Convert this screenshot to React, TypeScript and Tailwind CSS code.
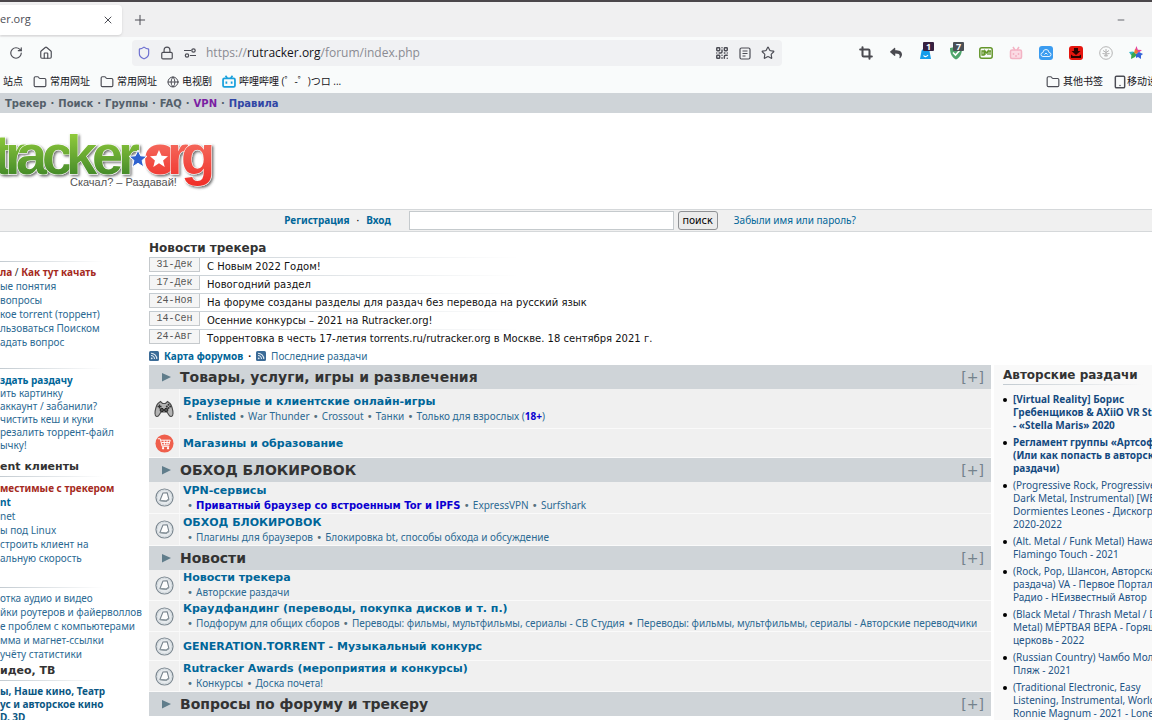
import type { ReactNode } from "react"
import { Crop, Folder, Globe, Home, Lock, Minus, Plus, QrCode, RotateCw, Shield, Star, Tablet, X } from "lucide-react"
import { FaReply } from "react-icons/fa"

type Sub = { text: string; className?: string }
type Forum = { title: string; icon?: "game" | "cart"; subs?: Sub[] }
type Section = { title: string; rowClass: string; forums: Forum[] }

const SECTIONS: Section[] = [
  {
    title: "Товары, услуги, игры и развлечения",
    rowClass: "min-h-[40px]",
    forums: [
      {
        title: "Браузерные и клиентские онлайн-игры",
        icon: "game",
        subs: [
          { text: "Enlisted", className: "font-bold text-[#006699]" },
          { text: "War Thunder" },
          { text: "Crossout" },
          { text: "Танки" },
          { text: "Только для взрослых (18+)" },
        ],
      },
      { title: "Магазины и образование", icon: "cart" },
    ],
  },
  {
    title: "ОБХОД БЛОКИРОВОК",
    rowClass: "min-h-[32px]",
    forums: [
      {
        title: "VPN-сервисы",
        subs: [
          { text: "Приватный браузер со встроенным Tor и IPFS", className: "font-['DejaVu_Sans',sans-serif] font-bold text-[#0a00d0]" },
          { text: "ExpressVPN" },
          { text: "Surfshark" },
        ],
      },
      {
        title: "ОБХОД БЛОКИРОВОК",
        subs: [{ text: "Плагины для браузеров" }, { text: "Блокировка bt, способы обхода и обсуждение" }],
      },
    ],
  },
  {
    title: "Новости",
    rowClass: "min-h-[31px]",
    forums: [
      { title: "Новости трекера", subs: [{ text: "Авторские раздачи" }] },
      {
        title: "Краудфандинг (переводы, покупка дисков и т. п.)",
        subs: [
          { text: "Подфорум для общих сборов" },
          { text: "Переводы: фильмы, мультфильмы, сериалы - СВ Студия" },
          { text: "Переводы: фильмы, мультфильмы, сериалы - Авторские переводчики" },
        ],
      },
      { title: "GENERATION.TORRENT - Музыкальный конкурс" },
      { title: "Rutracker Awards (мероприятия и конкурсы)", subs: [{ text: "Конкурсы" }, { text: "Доска почета!" }] },
    ],
  },
  { title: "Вопросы по форуму и трекеру", rowClass: "min-h-[31px]", forums: [] },
]

const NEWS = [
  ["31-Дек", "С Новым 2022 Годом!"],
  ["17-Дек", "Новогодний раздел"],
  ["24-Ноя", "На форуме созданы разделы для раздач без перевода на русский язык"],
  ["14-Сен", "Осенние конкурсы – 2021 на Rutracker.org!"],
  ["24-Авг", "Торрентовка в честь 17-летия torrents.ru/rutracker.org в Москве. 18 сентября 2021 г."],
]

const RELEASES = [
  { bold: true, lines: ["[Virtual Reality] Борис", "Гребенщиков & AXiiO VR Studio", "- «Stella Maris» 2020"] },
  { bold: true, lines: ["Регламент группы «Артсофт»", "(Или как попасть в авторские", "раздачи)"] },
  { lines: ["(Progressive Rock, Progressive", "Dark Metal, Instrumental) [WEB]", "Dormientes Leones - Дискография", "2020-2022"] },
  { lines: ["(Alt. Metal / Funk Metal) Hawaii", "Flamingo Touch - 2021"] },
  { lines: ["(Rock, Pop, Шансон, Авторская", "раздача) VA - Первое Портал", "Радио - НЕизвестный Автор"] },
  { lines: ["(Black Metal / Thrash Metal / Death", "Metal) МЁРТВАЯ ВЕРА - Горящая", "церковь - 2022"] },
  { lines: ["(Russian Country) Чамбо Молодой", "Пляж - 2021"] },
  { lines: ["(Traditional Electronic, Easy", "Listening, Instrumental, World)", "Ronnie Magnum - 2021 - Lonely"] },
]

function Fade({ className = "" }: { className?: string }) {
  return <div className={`h-px bg-gradient-to-r from-[#c3cbd1] to-transparent ${className}`} />
}

/* ---------- icons ---------- */

function GameIcon() {
  return (
    <svg viewBox="0 0 20 18" className="h-[18px] w-5" fill="none">
      <path d="M4 3.5 6.5 1.5 8.5 3.5h3l2-2L16 3.5c1.6 1.5 3 6.500 3 10 0 3.600-3 3.800-4.300 1.200L13 12H7l-1.700 2.700C4 17.300 1 17.100 1 13.500c0-3.500 1.400-8.500 3-10Z" fill="#b4b4b4" stroke="#4a4a4a" strokeWidth="1.100" />
      <path d="M5.500 4.500v4M3.500 6.500h4" stroke="#333" strokeWidth="1.300" />
      <circle cx="14.500" cy="4.800" r="1" fill="#333" />
      <circle cx="14.500" cy="8" r="1" fill="#333" />
      <circle cx="12.800" cy="6.400" r="1" fill="#333" />
      <circle cx="16.200" cy="6.400" r="1" fill="#333" />
      <circle cx="7.800" cy="10" r="1.700" fill="#555" stroke="#222" />
      <circle cx="12.200" cy="10" r="1.700" fill="#555" stroke="#222" />
    </svg>
  )
}

function CartIcon() {
  return (
    <svg viewBox="0 0 20 20" className="h-[19px] w-[19px]" fill="none">
      <circle cx="10" cy="10" r="9.500" fill="#ef5f4c" />
      <path d="M3 5h2.500l2 8h7.500M6.200 6.500H16l-1.500 5H7.300M6.800 9h8.500M9.500 6.500l.5 5M12.800 6.500l-.3 5" stroke="#fff" strokeWidth="1" />
      <circle cx="8.500" cy="15" r="1.200" fill="#fff" />
      <circle cx="13.700" cy="15" r="1.200" fill="#fff" />
    </svg>
  )
}

function ForumIcon() {
  return (
    <svg viewBox="0 0 20 20" className="h-[19px] w-[19px]" fill="none">
      <circle cx="10" cy="10" r="9" fill="#e6eaed" stroke="#7b8790" strokeWidth="1.200" />
      <circle cx="10" cy="10" r="7.600" stroke="#d3d9dd" strokeWidth="1" />
      <path d="M8.400 5.200 12.800 5l1.800 7-3 2-6.400-.8Z" fill="#fdfdfd" stroke="#77838c" strokeWidth="1.100" strokeLinejoin="round" />
      <path d="m5.200 13.200 6.400.8 3-2" stroke="#8d989f" strokeWidth="1.600" />
    </svg>
  )
}

function RssIcon() {
  return (
    <svg viewBox="0 0 10 10" className="h-[10px] w-[10px]" fill="none">
      <rect width="10" height="10" rx="1.500" fill="#3b6b97" />
      <path d="M2 4.500A3.500 3.500 0 0 1 5.500 8M2 2.200A5.800 5.800 0 0 1 7.800 8" stroke="#dfe9f2" strokeWidth="1.100" />
      <circle cx="2.700" cy="7.300" r=".9" fill="#dfe9f2" />
    </svg>
  )
}

function BiliIcon() {
  return (
    <svg viewBox="0 0 16 14" className="h-[13px] w-[14px]" fill="none" stroke="#18a0dc" strokeWidth="2">
      <rect x="1.200" y="3.500" width="13.600" height="9.500" rx="1.500" />
      <path d="m4 .5 2 2.500M12 .5l-2 2.500M5 7v2.500M11 7v2.500" />
    </svg>
  )
}

function PermissionsIcon() {
  return (
    <svg viewBox="0 0 14 10" className="h-[10px] w-[14px]" fill="none" stroke="#4c4d55" strokeWidth="1.200">
      <path d="M1 2.500h7M7 7.500h6" />
      <circle cx="10.500" cy="2.500" r="1.700" />
      <circle cx="4" cy="7.500" r="1.700" />
    </svg>
  )
}

function ReaderIcon() {
  return (
    <svg viewBox="0 0 12 13" className="h-[13px] w-3" fill="none" stroke="#4c4d55" strokeWidth="1.200">
      <rect x="1" y="1" width="10" height="11" rx="1.500" />
      <path d="M3.500 4h5M3.500 6.500h5M3.500 9h3" />
    </svg>
  )
}

function ExtIcon({ label, badge, children }: { label: string; badge?: ReactNode; children: ReactNode }) {
  return (
    <button type="button" aria-label={label} className="relative flex h-4 w-4 shrink-0 items-center justify-center">
      {children}
      {badge}
    </button>
  )
}

function Badge({ text, className }: { text: string; className: string }) {
  return (
    <span className={`absolute -top-[3px] left-[5px] flex h-[9px] w-[11px] items-center justify-center rounded-[1px] text-[9px] font-bold leading-none text-white ${className}`}>
      {text}
    </span>
  )
}

function Extensions() {
  return (
    <div className="flex h-[26px] w-[370px] shrink-0 items-center gap-[14px] overflow-hidden pl-[76px]">
      <ExtIcon label="Снимок"><Crop className="h-3.5 w-3.5 text-[#4a4a50]" strokeWidth={3.5} /></ExtIcon>
      <ExtIcon label="Назад"><FaReply className="h-3 w-3 text-[#4a4a50]" /></ExtIcon>
      <ExtIcon label="Уведомления" badge={<Badge text="1" className="bg-[#36203f]" />}>
        <svg viewBox="0 0 14 14" className="h-3.5 w-3.5">
          <path d="M1 13 2.500 5C3 2 10 2 10.500 5L12 13Z" fill="#149dea" />
          <path d="M4.500 9.500c1 1.500 3 1.500 4.500-.5" stroke="#fff" strokeWidth="1.200" fill="none" />
        </svg>
      </ExtIcon>
      <ExtIcon label="Защита" badge={<Badge text="7" className="bg-[#4a4f55]" />}>
        <svg viewBox="0 0 14 14" className="h-3.5 w-3.5">
          <path d="M1 2 7 .8 13 2c0 6-2 9.500-6 11.500C3 11.500 1 8 1 2Z" fill="#4fa56b" />
          <path d="m4 6.500 2.500 2.500L11 4" stroke="#fff" strokeWidth="1.600" fill="none" />
        </svg>
      </ExtIcon>
      <ExtIcon label="Менеджер">
        <svg viewBox="0 0 14 14" className="h-3.5 w-3.5" fill="none" stroke="#64962b">
          <rect x=".8" y="1.800" width="12.400" height="10.400" rx="2" strokeWidth="1.500" />
          <path d="M3 5h2v4H3ZM6 9V5l1.500 2L9 5v4M9.500 5H12M11 5v4" strokeWidth="1.300" />
        </svg>
      </ExtIcon>
      <ExtIcon label="Телевизор">
        <svg viewBox="0 0 14 14" className="h-3.5 w-3.5" fill="none" stroke="#f3b3c4" strokeWidth="1.500">
          <rect x="1.500" y="4" width="11" height="8.500" rx="1.500" fill="#fbdbe4" />
          <path d="m4 1 2 3M10 1 8 4M4.500 7v2M9.500 7v2M6 10h2" />
        </svg>
      </ExtIcon>
      <ExtIcon label="Облако">
        <svg viewBox="0 0 14 14" className="h-3.5 w-3.5" fill="none">
          <rect width="14" height="14" rx="3" fill="#3b9cf0" />
          <path d="M4 10.500a2 2 0 0 1 0-4 3 3 0 0 1 6 0 2 2 0 0 1 0 4ZM5.500 8.500 7 7l1.500 1.500" stroke="#e5f3ff" />
        </svg>
      </ExtIcon>
      <ExtIcon label="Загрузка">
        <svg viewBox="0 0 14 14" className="h-3.5 w-3.5">
          <rect width="14" height="14" rx="3" fill="#e5150e" />
          <path d="M5 2h4v3h2.500L7 9 2.500 5H5ZM2 8.500l2 1.500h6l2-1.500V12H2Z" fill="#2b0300" />
        </svg>
      </ExtIcon>
      <ExtIcon label="Кофе">
        <svg viewBox="0 0 14 14" className="h-3.5 w-3.5" fill="none" stroke="#b4b4b4">
          <circle cx="7" cy="7" r="6.300" />
          <path d="M7 3v8M4 4.500l3 2 3-2M3.500 7.500 7 8l3.500-.5M5 10l2-1 2 1" />
        </svg>
      </ExtIcon>
      <ExtIcon label="Магазин">
        <svg viewBox="0 0 14 14" className="h-3.5 w-3.5">
          <path d="m7.500 0 1.300 3.700L13 4l-3 2.500L8 7 6 4Z" fill="#e5439c" />
          <path d="m0 6 4-.5L7 7 5 9H2Z" fill="#30b7c4" />
          <path d="m2 13 .5-5L5 6l2.500 3L6 11Z" fill="#3aa84c" />
          <path d="m7 8 3-2 4 2-2 1.500L12 13 9 11 7 12Z" fill="#3565d8" />
          <path d="m6 3 3 2-1 3-3-1Z" fill="#ef7d31" />
        </svg>
      </ExtIcon>
    </div>
  )
}

/* ---------- browser frame ---------- */

function Bookmark({ icon, children }: { icon: ReactNode; children: ReactNode }) {
  return (
    <a href="#" className="flex items-center gap-[3px] whitespace-nowrap">
      {icon}
      {children}
    </a>
  )
}

function BrowserChrome() {
  return (
    <header className="shrink-0 border-t-2 border-[#4b474b] bg-[#f0f0f1] font-['Open_Sans','Noto_Sans_CJK_SC',sans-serif] text-[#4c4d55]">
      <div className="flex h-[35px] items-center">
        <div className="flex h-[30px] w-[122px] items-center justify-between rounded-r bg-white pr-2 text-[11px] shadow">
          <span>er.org</span>
          <button type="button" aria-label="Закрыть вкладку"><X className="h-3 w-3" strokeWidth={2} /></button>
        </div>
        <button type="button" aria-label="Новая вкладка" className="ml-2.5"><Plus className="h-4 w-4" strokeWidth={1.5} /></button>
        <button type="button" aria-label="Свернуть" className="ml-auto mr-[26px]"><Minus className="h-2.5 w-2.5" strokeWidth={2} /></button>
      </div>

      <div className="flex items-center bg-[#f9fbfb] pt-[3px]">
        <div className="flex w-[132px] shrink-0 items-center gap-4 pl-[9px]">
          <button type="button" aria-label="Обновить"><RotateCw className="h-3.5 w-3.5" strokeWidth={2} /></button>
          <button type="button" aria-label="Домой"><Home className="h-3.5 w-3.5" strokeWidth={2} /></button>
        </div>
        <div className="flex h-[26px] min-w-0 flex-1 items-center gap-[9px] rounded bg-[#f0f1f3] pl-[5px] pr-[7px]">
          <Shield className="h-3.5 w-3.5 shrink-0 text-[#6c6fd0]" strokeWidth={2} />
          <Lock className="h-3.5 w-3.5 shrink-0" strokeWidth={2} />
          <PermissionsIcon />
          <div className="min-w-0 flex-1 truncate text-[12px] text-[#8a8b92]">
            https://<span className="text-[#15141a]">rutracker.org</span>/forum/index.php
          </div>
          <div className="flex items-center gap-[10px]">
            <QrCode className="h-3.5 w-3.5 shrink-0" strokeWidth={2.5} />
            <ReaderIcon />
            <Star className="h-3.5 w-3.5 shrink-0" strokeWidth={2} />
          </div>
        </div>
        <Extensions />
      </div>

      <nav className="flex h-[27px] items-center gap-2.5 overflow-hidden bg-[#f9fbfb] pl-[3px] pt-1 text-[10px] text-[#15141a]">
        <a href="#" className="whitespace-nowrap">站点</a>
        <Bookmark icon={<Folder className="h-3.5 w-3.5 text-[#4c4d55]" strokeWidth={2} />}>常用网址</Bookmark>
        <Bookmark icon={<Folder className="h-3.5 w-3.5 text-[#4c4d55]" strokeWidth={2} />}>常用网址</Bookmark>
        <Bookmark icon={<Globe className="h-3 w-3 text-[#4c4d55]" strokeWidth={2} />}>电视剧</Bookmark>
        <Bookmark icon={<BiliIcon />}>哔哩哔哩 (゜-゜)つロ ...</Bookmark>
        <div className="ml-auto flex items-center gap-2.5">
          <Bookmark icon={<Folder className="h-3.5 w-3.5 text-[#4c4d55]" strokeWidth={2} />}>其他书签</Bookmark>
          <div className="w-[39px] overflow-hidden">
            <Bookmark icon={<Tablet className="-mr-[3px] h-3.5 w-3.5 shrink-0 text-[#4c4d55]" strokeWidth={2.5} />}>移动设备</Bookmark>
          </div>
        </div>
      </nav>
    </header>
  )
}

/* ---------- page ---------- */

function Logo() {
  const star = "M0-9 2.600-3.200 9-2.700 4.100 1.400 5.700 8 0 4.300-5.700 8-4.100 1.400-9-2.700-2.600-3.200Z"
  return (
    <svg viewBox="0 0 220 96" className="h-24 w-[220px]" role="img" aria-label="rutracker.org">
      <defs>
        <linearGradient id="green" gradientUnits="userSpaceOnUse" x1="0" y1="20" x2="0" y2="62">
          <stop offset="0" stopColor="#92cc3c" />
          <stop offset="1" stopColor="#458b2a" />
        </linearGradient>
        <linearGradient id="red" gradientUnits="userSpaceOnUse" x1="0" y1="30" x2="0" y2="74">
          <stop offset="0" stopColor="#f4685c" />
          <stop offset="1" stopColor="#f02c26" />
        </linearGradient>
        <filter id="drop" x="-10%" y="-10%" width="120%" height="130%">
          <feDropShadow dx="1.500" dy="1.500" stdDeviation="0.800" floodColor="#333" floodOpacity="0.700" />
        </filter>
      </defs>
      <g filter="url(#drop)" fontFamily="'Liberation Sans', sans-serif" fontWeight="bold" fontSize="56" stroke="#fff" strokeWidth="1" paintOrder="stroke">
        <text y="61" x="-7 5 16 42 66 92 118" fill="url(#green)">tracker</text>
        <text y="61" x="143 167 181" fill="url(#red)">org</text>
        <ellipse cx="159" cy="46" rx="10" ry="12" fill="url(#red)" stroke="none" />
      </g>
      <path d={star} transform="translate(159 46)" fill="#fff" />
      <path d={star} transform="translate(138 46)" fill="#2f62cf" stroke="#fff" strokeWidth="1" />
      <text x="70" y="73" fontFamily="'Liberation Sans', sans-serif" fontSize="11" fill="#555">Скачал? – Раздавай!</text>
    </svg>
  )
}

function SideBlock({ title, headClass, listClass, children }: { title?: string; headClass: string; listClass: string; children: ReactNode }) {
  return (
    <section>
      <div className={`flex flex-col justify-end ${headClass}`}>
        {title && <h3 className="mb-[3px] font-['DejaVu_Sans',sans-serif] text-[11px] font-bold leading-[13px] text-[#333]">{title}</h3>}
        <Fade className="w-[104px]" />
      </div>
      <ul className={listClass}>{children}</ul>
    </section>
  )
}

function Item({ children, className = "" }: { children: ReactNode; className?: string }) {
  return <li><a href="#" className={className}>{children}</a></li>
}

function LeftSidebar() {
  const strong = "font-bold text-[#006699]"
  return (
    <aside className="w-[143px] shrink-0 overflow-hidden whitespace-nowrap font-['Noto_Sans',sans-serif] text-[10px] text-[#2c6a93]">
      <SideBlock headClass="h-[30px]" listClass="pt-[3px] leading-[14px]">
        <li className="font-bold text-[#a52a21]">
          <a href="#">ла</a> <span className="font-normal text-[#333]">/</span> <a href="#">Как тут качать</a>
        </li>
        <Item>ые понятия</Item>
        <Item>вопросы</Item>
        <Item>кое torrent (торрент)</Item>
        <Item>льзоваться Поиском</Item>
        <Item>адать вопрос</Item>
      </SideBlock>
      <SideBlock headClass="h-5" listClass="pt-[5px] leading-[13px]">
        <Item className={strong}>здать раздачу</Item>
        <Item>ить картинку</Item>
        <Item>аккаунт / забанили?</Item>
        <Item>чистить кеш и куки</Item>
        <Item>резалить торрент-файл</Item>
        <Item>ычку!</Item>
      </SideBlock>
      <SideBlock title="ent клиенты" headClass="h-[25px]" listClass="pt-1 leading-[14px]">
        <Item className="font-bold text-[#a52a21]">местимые с трекером</Item>
        <Item className={strong}>nt</Item>
        <Item>net</Item>
        <Item>ы под Linux</Item>
        <Item>строить клиент на</Item>
        <Item>альную скорость</Item>
      </SideBlock>
      <SideBlock headClass="h-[23px]" listClass="pt-[3px] leading-[14px]">
        <Item>отка аудио и видео</Item>
        <Item>йки роутеров и файерволлов</Item>
        <Item>е проблем с компьютерами</Item>
        <Item>мма и магнет-ссылки</Item>
        <Item>учёту статистики</Item>
      </SideBlock>
      <SideBlock title="идео, ТВ" headClass="h-5" listClass="pt-1 font-bold leading-[13px] text-[#0a5783]">
        <Item>ы, Наше кино, Театр</Item>
        <Item>ус и авторское кино</Item>
        <Item>D, 3D</Item>
      </SideBlock>
    </aside>
  )
}

function News() {
  return (
    <section className="pt-[10px]">
      <h3 className="pb-[2px] text-[12px] font-bold leading-[13px] text-[#333]">Новости трекера</h3>
      {NEWS.map(([date, text]) => (
        <div key={date}>
          <Fade className="w-[370px]" />
          <div className="flex h-[17px] items-start whitespace-nowrap text-[10px]">
            <span className="h-[14px] w-[51px] border border-t-0 border-[#c5c9cc] bg-[#f5f5f5] text-center font-['Liberation_Mono',monospace] leading-[13px] text-[#555]">
              {date}
            </span>
            <a href="#" className="pl-[7px] leading-[18px] text-[#111]">{text}</a>
          </div>
        </div>
      ))}
      <div className="flex h-[18px] items-center gap-[5px] font-['Noto_Sans',sans-serif] text-[10px] text-[#2c6a93]">
        <RssIcon />
        <a href="#" className="font-bold text-[#006699]">Карта форумов</a>
        <span className="font-bold text-black">·</span>
        <RssIcon />
        <a href="#">Последние раздачи</a>
      </div>
    </section>
  )
}

function ForumRow({ forum, className }: { forum: Forum; className: string }) {
  return (
    <div className={`flex border-b border-[#fafafa] bg-[#f0f0f0] ${forum.subs ? className : "min-h-[29px]"}`}>
      <div className="flex w-[31px] shrink-0 items-center justify-center border-r border-[#f8f8f8]">
        {forum.icon === "game" ? <GameIcon /> : forum.icon === "cart" ? <CartIcon /> : <ForumIcon />}
      </div>
      <div className="flex min-w-0 flex-col justify-center whitespace-nowrap pl-[3px]">
        <h4 className="text-[11px] font-bold leading-[15px] text-[#006699]"><a href="#">{forum.title}</a></h4>
        {forum.subs && (
          <p className="pl-1 font-['Noto_Sans',sans-serif] text-[10px] leading-[14px] text-[#2c6a93]">
            {forum.subs.map((sub, i) => (
              <span key={i}>
                <span className="font-['DejaVu_Sans',sans-serif] text-[#55707f]">{i > 0 ? " • " : "• "}</span>
                <a href="#" className={sub.className}>
                  {sub.text.endsWith("(18+)") ? (
                    <>{sub.text.replace("18+)", "")}<b className="text-[#0a00d0]">18+</b>)</>
                  ) : sub.text}
                </a>
              </span>
            ))}
          </p>
        )}
      </div>
    </div>
  )
}

function ForumSection({ section }: { section: Section }) {
  return (
    <section>
      <div className="flex h-6 items-center bg-[#cfd4d8] pl-3 pr-[7px]">
        <svg viewBox="0 0 10 10" className="h-2.5 w-2.5"><path d="M1 1 10 5 1 9.500Z" fill="#607d8b" /></svg>
        <h3 className="flex-1 pl-[9px] text-[14px] font-bold text-[#333]">{section.title}</h3>
        <button type="button" aria-label="Развернуть" className="text-[14px] text-[#74828c]">[+]</button>
      </div>
      {section.forums.map((forum) => (
        <ForumRow key={forum.title} forum={forum} className={section.rowClass} />
      ))}
    </section>
  )
}

function Releases() {
  return (
    <aside className="w-[158px] shrink-0 overflow-hidden whitespace-nowrap bg-[#f9f9f9] pl-[9px] pt-1 text-[10px] text-[#235486]">
      <h3 className="pb-[2px] text-[12px] font-bold leading-[13px] text-[#333]">Авторские раздачи</h3>
      <Fade className="w-[140px]" />
      <ul className="flex flex-col gap-1 pt-2 font-['Noto_Sans',sans-serif] leading-[13px]">
        {RELEASES.map((item, i) => (
          <li key={i} className="flex gap-[6px]">
            <span className="mt-[5px] h-1 w-1 shrink-0 rounded-full bg-black" />
            <a href="#" className={item.bold ? "font-bold text-[#144a80]" : ""}>
              {item.lines.map((line) => <span key={line} className="block">{line}</span>)}
            </a>
          </li>
        ))}
      </ul>
    </aside>
  )
}

export default function App() {
  return (
    <div className="flex h-screen flex-col overflow-hidden bg-white font-['DejaVu_Sans',sans-serif]">
      <BrowserChrome />

      <nav className="flex h-5 shrink-0 items-center gap-1 bg-[#cfd4d8] pl-[5px] text-[10px] font-bold text-[#54606a]">
        <a href="#">Трекер</a>·<a href="#">Поиск</a>·<a href="#">Группы</a>·<a href="#">FAQ</a>·
        <a href="#" className="text-[#7a1fa2]">VPN</a>·<a href="#" className="text-[#3046a5]">Правила</a>
      </nav>

      <div className="h-24 shrink-0"><Logo /></div>

      <form
        onSubmit={(e) => e.preventDefault()}
        className="flex h-[23px] shrink-0 items-center justify-center border-y border-[#d5d8da] bg-[#f0f0f0] pr-3 font-['Noto_Sans',sans-serif] text-[10px] text-[#006699]"
      >
        <a href="#" className="font-bold">Регистрация</a>
        <span className="px-[7px] text-black">·</span>
        <a href="#" className="font-bold">Вход</a>
        <input type="text" aria-label="Поиск" className="ml-[18px] h-[19px] w-[265px] border border-[#c5cacd] bg-white px-1 text-black" />
        <button type="submit" className="ml-1 h-[19px] w-10 rounded-[3px] border border-[#8f9194] bg-[#ebebeb] font-['DejaVu_Sans',sans-serif] text-black">поиск</button>
        <a href="#" className="ml-4">Забыли имя или пароль?</a>
      </form>

      <div className="flex min-h-0 flex-1 overflow-hidden">
        <LeftSidebar />
        <main className="min-w-0 flex-1 pl-[6px]">
          <News />
          <div className="flex gap-[3px]">
            <div className="min-w-0 flex-1">
              {SECTIONS.map((section) => <ForumSection key={section.title} section={section} />)}
            </div>
            <Releases />
          </div>
        </main>
      </div>
    </div>
  )
}
